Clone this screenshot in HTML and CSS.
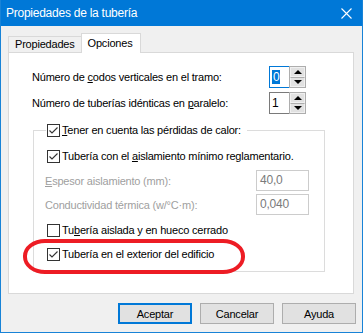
FILE: index.html
```html
<!DOCTYPE html>
<html lang="es">
<head>
  <meta charset="UTF-8">
  <title>Propiedades de la tubería</title>
  <link rel="stylesheet" href="styles.css">
</head>
<body>
  <div class="window">
    <div class="titlebar">
      <span class="title">Propiedades de la tubería</span>
      <svg class="close" width="11" height="11" viewBox="0 0 11 11">
        <path d="M0.5 0.5 L10.5 10.5 M10.5 0.5 L0.5 10.5" stroke="#fff" stroke-width="1.1" fill="none"/>
      </svg>
    </div>

    <div class="client">
      <div class="tabs">
        <div class="tab">Propiedades</div>
        <div class="tab active">Opciones</div>
      </div>

      <div class="panel">
        <div class="row">
          <span class="label">Número de <u>c</u>odos verticales en el tramo:</span>
          <div class="spin">
            <div class="edit focus"><span class="sel">0</span></div>
            <div class="spin-btns">
              <span class="sbtn"><i class="tri up"></i></span>
              <span class="sbtn"><i class="tri down"></i></span>
            </div>
          </div>
        </div>
        <div class="row second">
          <span class="label">Número de tuberías idénticas en <u>p</u>aralelo:</span>
          <div class="spin">
            <div class="edit"><span class="val">1</span></div>
            <div class="spin-btns">
              <span class="sbtn"><i class="tri up"></i></span>
              <span class="sbtn"><i class="tri down"></i></span>
            </div>
          </div>
        </div>

        <fieldset class="group">
          <legend class="legend">
            <span class="check on"></span><span class="text"><u>T</u>ener en cuenta las pérdidas de calor:</span>
          </legend>

          <div class="check-row first">
            <span class="check on"></span><span class="text">Tubería con el <u>a</u>islamiento mínimo reglamentario.</span>
          </div>
          <div class="field-row first-field">
            <span class="label dim"><u>E</u>spesor aislamiento (mm):</span>
            <span class="num">40,0</span>
          </div>
          <div class="field-row">
            <span class="label dim">Conductividad térmica (w/°C·m):</span>
            <span class="num">0,040</span>
          </div>
          <div class="check-row">
            <span class="check"></span><span class="text">Tu<u>b</u>ería aislada y en hueco cerrado</span>
          </div>
          <div class="check-row marked">
            <span class="check on"></span><span class="text">Tubería en el exterior del edificio</span>
            <span class="ring"></span>
          </div>
        </fieldset>
      </div>

      <div class="buttons">
        <button class="btn default">Aceptar</button>
        <button class="btn">Cancelar</button>
        <button class="btn">Ayuda</button>
      </div>
    </div>
  </div>
</body>
</html>
```

FILE: styles.css
```css
body {
  margin: 0;
  font-family: "Liberation Sans", Arial, sans-serif;
  font-size: 11px;
  letter-spacing: -0.2px;
  color: #000;
}

.window {
  width: 363px;
  height: 333px;
  box-sizing: border-box;
  border: 1px solid #1883d7;
  border-top: none;
  background: #f0f0f0;
  display: flex;
  flex-direction: column;
}

.titlebar {
  height: 26px;
  background: #0078d7;
  display: flex;
  align-items: center;
  justify-content: space-between;
  padding: 0 10px 0 5px;
  color: #fff;
  flex-shrink: 0;
}

.title {
  font-size: 12px;
  letter-spacing: -0.25px;
  line-height: 16px;
}

.close {
  display: block;
}

.client {
  padding: 7px 0 0 7px;
}

.tabs {
  display: flex;
  align-items: flex-end;
  height: 19px;
}

.tab {
  height: 16px;
  box-sizing: border-box;
  border: 1px solid #d9d9d9;
  border-bottom: none;
  padding: 0 6px 0 6px;
  line-height: 15px;
}

.tab.active {
  height: 20px;
  margin-bottom: -1px;
  margin-left: -1px;
  background: #fff;
  position: relative;
  z-index: 1;
  padding: 0 8px 0 6px;
  line-height: 18px;
}

.panel {
  width: 346px;
  height: 242px;
  box-sizing: border-box;
  border: 1px solid #d9d9d9;
  background: #fff;
  padding: 13px 47px 0 23px;
}

.row {
  display: flex;
  align-items: center;
  justify-content: space-between;
  height: 22px;
}

.row.second {
  margin-top: 4px;
}

.label,
.text {
  white-space: nowrap;
}

u {
  text-decoration: underline;
  text-underline-offset: 1px;
}

.spin {
  display: flex;
  height: 22px;
}

.edit {
  width: 20px;
  box-sizing: border-box;
  border: 1px solid #7a7a7a;
  border-right: none;
  padding: 2px 0 0 2px;
  line-height: 16px;
  font-size: 12px;
}

.edit.focus {
  border-color: #0078d7;
}

.sel {
  display: inline-block;
  background: #0078d7;
  color: #fff;
  padding: 0 1px;
  line-height: 14px;
  margin-top: 1px;
}

.val {
  color: #000;
}

.spin-btns {
  display: flex;
  flex-direction: column;
  width: 17px;
  border: 1px solid #adadad;
  box-sizing: border-box;
  background: #e1e1e1;
}

.sbtn {
  flex: 1;
  display: flex;
  align-items: center;
  justify-content: center;
  border: 1px solid #f0f0f0;
  background: #e1e1e1;
}

.sbtn + .sbtn {
  border-top: 1px solid #adadad;
}

.tri {
  width: 0;
  height: 0;
  border-left: 4px solid transparent;
  border-right: 4px solid transparent;
}

.tri.up {
  border-bottom: 4px solid #000;
}

.tri.down {
  border-top: 4px solid #000;
}

.group {
  margin: 8px 0 0 1px;
  width: 292px;
  box-sizing: border-box;
  border: 1px solid #dcdcdc;
  padding: 0 15px 8px 0;
  min-width: 0;
}

.legend {
  margin-left: 12px;
  padding: 0 6px 0 1px;
  height: 16px;
  line-height: 16px;
  display: flex;
  align-items: center;
}

.check {
  display: inline-block;
  width: 13px;
  height: 13px;
  box-sizing: border-box;
  border: 1px solid #333;
  background: #fff;
  margin-right: 2px;
  flex-shrink: 0;
}

.check.on {
  background: #fff url("data:image/svg+xml,%3Csvg xmlns='http://www.w3.org/2000/svg' width='11' height='11'%3E%3Cpath d='M1.5 5.5 L4 8 L9.5 2.5' stroke='%23333' stroke-width='1.1' fill='none'/%3E%3C/svg%3E") no-repeat center;
}

.check-row {
  display: flex;
  align-items: center;
  height: 18px;
  padding-left: 13px;
  margin-top: 6px;
  position: relative;
}

.check-row.first {
  margin-top: 9px;
}

.field-row {
  display: flex;
  align-items: center;
  justify-content: space-between;
  height: 21px;
  padding-left: 11px;
  margin-top: 3px;
}

.field-row.first-field {
  margin-top: 5px;
}

.dim {
  color: #a0a0a0;
}

.num {
  width: 53px;
  height: 21px;
  box-sizing: border-box;
  border: 1px solid #cccccc;
  color: #7a7a7a;
  padding: 1px 0 0 3px;
  line-height: 17px;
  font-size: 12px;
}

.ring {
  position: absolute;
  left: -11px;
  top: -6px;
  width: 222px;
  height: 35px;
  box-sizing: border-box;
  border: 4px solid #ed1c24;
  border-radius: 22px / 17px;
}

.buttons {
  display: flex;
  justify-content: flex-end;
  gap: 8px;
  padding: 9px 6px 0 0;
}

.btn {
  width: 74px;
  height: 21px;
  font-family: inherit;
  font-size: 11px;
  letter-spacing: inherit;
  background: #e1e1e1;
  border: 1px solid #adadad;
  padding: 0;
  color: #000;
}

.btn.default {
  border-color: #0078d7;
  box-shadow: inset 0 0 0 1px #0078d7;
}
```
